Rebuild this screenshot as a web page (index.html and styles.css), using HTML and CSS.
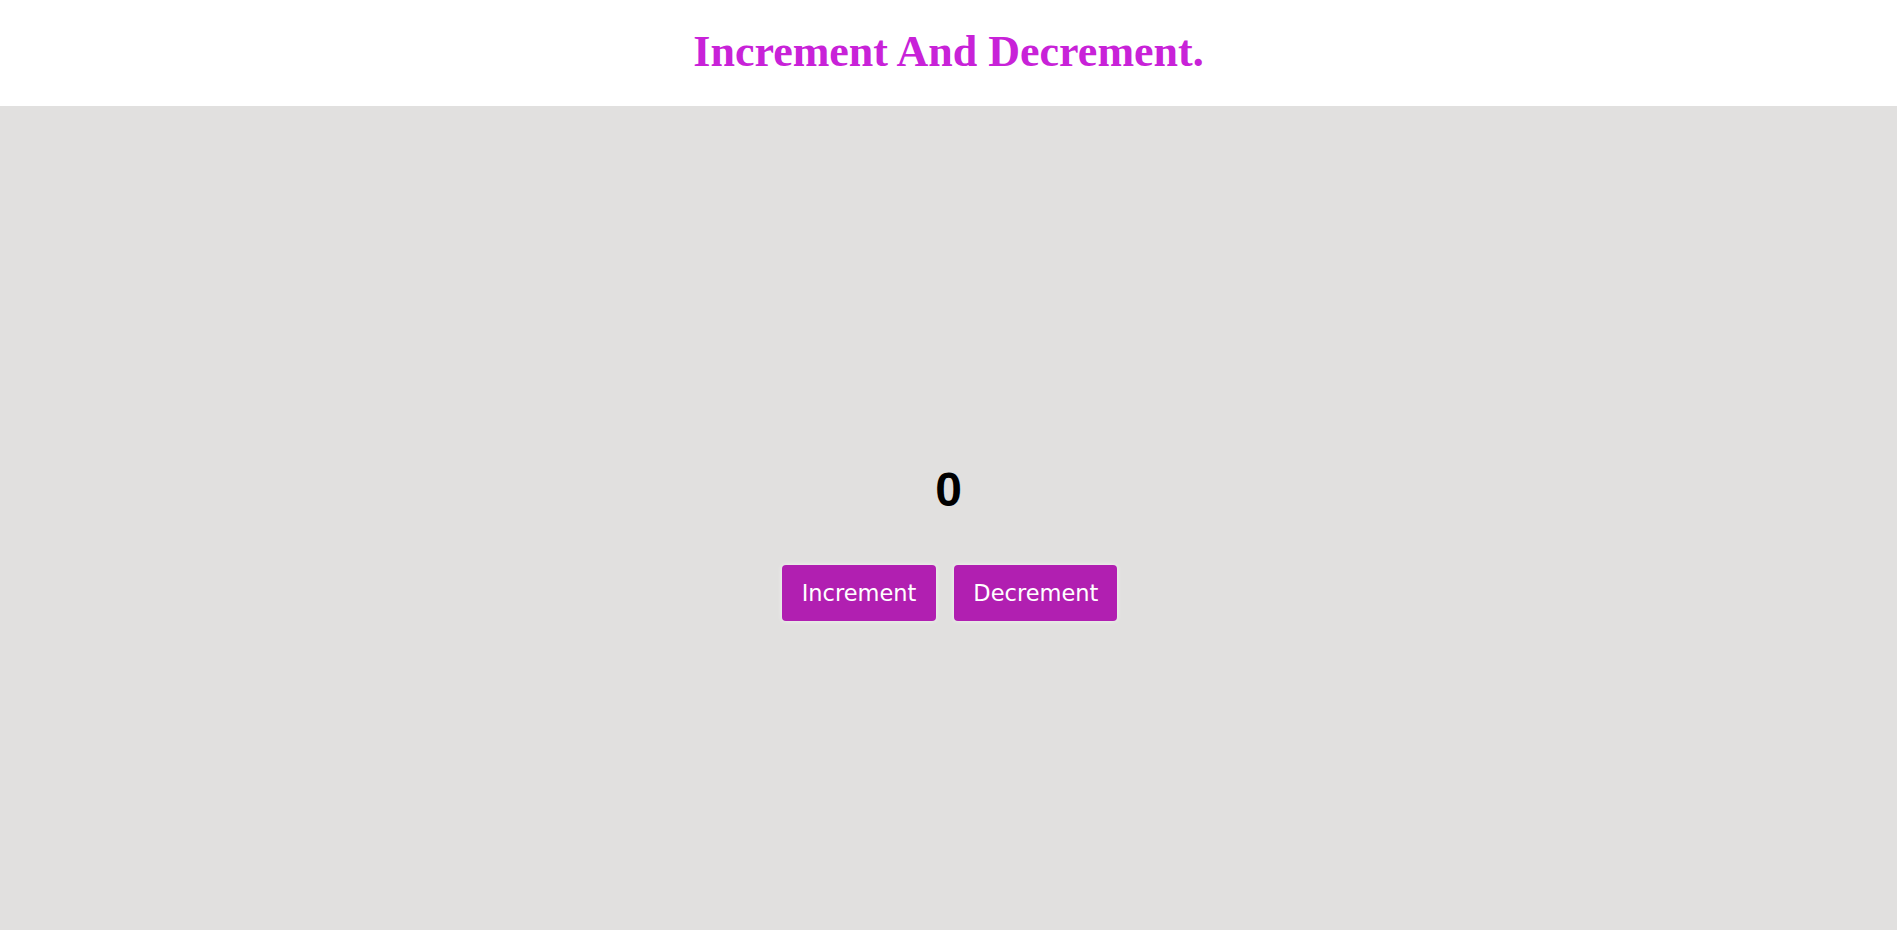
FILE: index.html
```html
<!DOCTYPE html>
<html lang="en">
<head>
<meta charset="utf-8">
<title>Increment And Decrement</title>
<link rel="stylesheet" href="styles.css">
</head>
<body>
<header class="header">
  <h1 class="title">Increment And Decrement.</h1>
</header>
<main class="main">
  <div class="counter">0</div>
  <div class="actions">
    <button class="btn" type="button">Increment</button>
    <button class="btn" type="button">Decrement</button>
  </div>
</main>
</body>
</html>
```

FILE: styles.css
```css
* { box-sizing: border-box; }
html, body { margin: 0; padding: 0; height: 100%; }
body {
  background: #e1e0df;
  font-family: "DejaVu Sans", sans-serif;
  display: flex;
  flex-direction: column;
}
.header {
  background: #ffffff;
  height: 106px;
  display: flex;
  align-items: center;
  justify-content: center;
  padding-bottom: 4px;
}
.title {
  margin: 0;
  font-family: "Liberation Serif", "Times New Roman", serif;
  font-weight: bold;
  font-size: 44px;
  color: #c822d8;
}
.main {
  flex: 1;
  display: flex;
  flex-direction: column;
  align-items: center;
  justify-content: center;
  padding-top: 46px;
}
.counter {
  font-family: "Liberation Sans", Arial, sans-serif;
  font-weight: bold;
  font-size: 48px;
  line-height: 56px;
  color: #000;
}
.actions {
  margin-top: 47px;
  display: flex;
  gap: 18px;
  padding-left: 2px;
}
.btn {
  font-family: "DejaVu Sans", sans-serif;
  font-size: 22.5px;
  color: #fff;
  background: #b11fb1;
  border: none;
  border-radius: 4px;
  height: 56px;
  padding: 0 20px;
  box-shadow: 0 0 5px rgba(255, 255, 255, 0.6);
}
.btn + .btn {
  padding: 0 19px;
}
```
